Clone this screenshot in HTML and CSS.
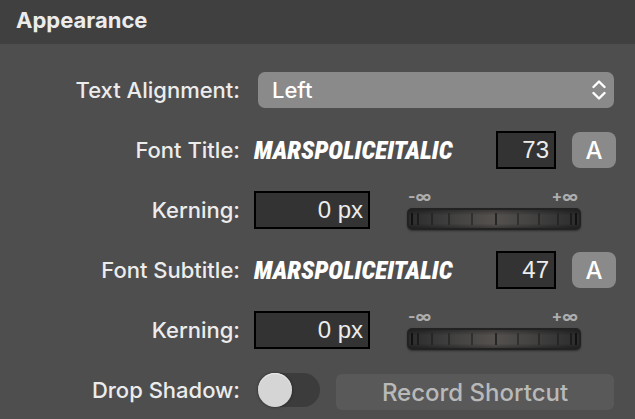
FILE: index.html
```html
<!DOCTYPE html>
<html lang="en">
<head>
    <meta charset="UTF-8">
    <meta name="viewport" content="width=device-width, initial-scale=1.0">
    <title>Appearance</title>
    <link rel="stylesheet" href="styles.css">
</head>
<body>
    <h2 class="panel-title">Appearance</h2>
    <form class="panel">
        <div class="row">
            <label class="name" for="align">Text Alignment:</label>
            <div class="controls inset">
                <div class="select-wrap">
                    <select id="align">
                        <option>Left</option>
                        <option>Center</option>
                        <option>Right</option>
                    </select>
                    <svg class="chevrons" viewBox="0 0 14 20" width="14" height="20" aria-hidden="true">
                        <path d="M1.5 7 7 1.5 12.5 7M1.5 13 7 18.5 12.5 13"/>
                    </svg>
                </div>
            </div>
        </div>
        <div class="row">
            <label class="name" for="titleSize">Font Title:</label>
            <div class="controls">
                <span class="font-name">MARSPOLICEITALIC</span>
                <input class="field size" type="text" id="titleSize" value="73">
                <button class="font-btn" type="button" aria-label="Choose title font">A</button>
            </div>
        </div>
        <div class="row">
            <label class="name" for="titleKern">Kerning:</label>
            <div class="controls">
                <input class="field kern" type="text" id="titleKern" value="0 px">
                <div class="wheel-box">
                    <div class="limits"><span>-∞</span><span>+∞</span></div>
                    <input class="wheel" type="range" aria-label="Title kerning">
                </div>
            </div>
        </div>
        <div class="row">
            <label class="name" for="subSize">Font Subtitle:</label>
            <div class="controls">
                <span class="font-name">MARSPOLICEITALIC</span>
                <input class="field size" type="text" id="subSize" value="47">
                <button class="font-btn" type="button" aria-label="Choose subtitle font">A</button>
            </div>
        </div>
        <div class="row">
            <label class="name" for="subKern">Kerning:</label>
            <div class="controls">
                <input class="field kern" type="text" id="subKern" value="0 px">
                <div class="wheel-box">
                    <div class="limits"><span>-∞</span><span>+∞</span></div>
                    <input class="wheel" type="range" aria-label="Subtitle kerning">
                </div>
            </div>
        </div>
        <div class="row">
            <label class="name" for="shadow">Drop Shadow:</label>
            <div class="controls inset">
                <input class="switch" type="checkbox" id="shadow">
                <button class="record" type="button">Record Shortcut</button>
            </div>
        </div>
    </form>
</body>
</html>
```

FILE: styles.css
```css
* {
    box-sizing: border-box;
}
body {
    margin: 0;
    background: #4e4e4e;
    color: #ececec;
    font-family: Inter, "Liberation Sans", sans-serif;
    font-size: 22px;
    font-weight: 500;
    overflow: hidden;
}
.panel-title {
    margin: 0;
    padding: 0 16px;
    height: 44px;
    line-height: 40px;
    background: #404040;
    font-size: 22px;
    font-weight: 700;
}
.panel {
    padding: 16px 19px 0 0;
}
.row {
    display: flex;
    align-items: center;
    height: 60px;
}
.name {
    flex: 0 0 240px;
    text-align: right;
    white-space: nowrap;
}
.controls {
    flex: 1;
    display: flex;
    align-items: center;
    padding-left: 14px;
}
.inset {
    padding-left: 18px;
    padding-right: 2px;
}
input, select, button {
    margin: 0;
    border: 0;
    font: inherit;
    color: inherit;
}
.select-wrap {
    position: relative;
    flex: 1;
}
select {
    appearance: none;
    display: block;
    width: 100%;
    height: 36px;
    padding: 0 14px;
    border-radius: 7px;
    background: #8a8a8a;
    color: #fff;
}
.chevrons {
    position: absolute;
    top: 8px;
    right: 8px;
    fill: none;
    stroke: #fff;
    stroke-width: 2.4;
    stroke-linecap: round;
    stroke-linejoin: round;
    pointer-events: none;
}
.font-name {
    flex: 1;
    color: #fff;
    font: italic 900 25px "Roboto Condensed", Roboto, sans-serif;
}
.field {
    height: 38px;
    padding: 0 5px;
    border: 2px solid #000;
    background: #333;
    font: 24px "Liberation Sans", Arial, sans-serif;
    text-align: right;
}
.size {
    width: 60px;
}
.kern {
    width: 116px;
}
.font-btn {
    width: 44px;
    height: 36px;
    margin-left: 16px;
    padding: 0;
    border-radius: 8px;
    background: #8a8a8a;
    color: #fff;
    font-size: 24px;
}
.wheel-box {
    flex: 1;
    margin: 0 35px 0 37px;
}
.limits {
    display: flex;
    justify-content: space-between;
    height: 18px;
    padding: 0 3px 0 1px;
    color: #adadad;
    font-size: 16px;
    font-weight: 700;
    line-height: 12px;
}
.wheel {
    appearance: none;
    display: block;
    width: 100%;
    height: 22px;
    border: 2px solid #222;
    border-radius: 5px;
    background:
        linear-gradient(#111, #111) 1% 50% / 2px 12px,
        linear-gradient(#1c1c1c, #1c1c1c) 5% 50% / 2px 12px,
        linear-gradient(#262626, #262626) 13% 50% / 2px 12px,
        linear-gradient(#2b2b2b, #2b2b2b) 23% 50% / 2px 12px,
        linear-gradient(#303030, #303030) 37% 50% / 2px 12px,
        linear-gradient(#262626, #262626) 51% 50% / 2px 12px,
        linear-gradient(#303030, #303030) 64% 50% / 2px 12px,
        linear-gradient(#2b2b2b, #2b2b2b) 77% 50% / 2px 12px,
        linear-gradient(#262626, #262626) 88% 50% / 2px 12px,
        linear-gradient(#1c1c1c, #1c1c1c) 96% 50% / 2px 12px,
        linear-gradient(#111, #111) 99% 50% / 2px 12px,
        linear-gradient(rgba(0, 0, 0, 0.3), transparent 30%, transparent 75%, rgba(0, 0, 0, 0.3)),
        linear-gradient(90deg, #2c2c2c, #454443 30%, #55514f 50%, #454443 70%, #2c2c2c);
    background-repeat: no-repeat;
    box-shadow: 0 1px 2px rgba(0, 0, 0, 0.4);
}
.wheel::-webkit-slider-thumb {
    appearance: none;
    width: 2px;
    height: 12px;
    background: transparent;
}
.switch {
    appearance: none;
    width: 62px;
    height: 34px;
    border-radius: 17px;
    background: #3c3c3c;
}
.switch::before {
    content: "";
    display: block;
    width: 34px;
    height: 34px;
    border-radius: 50%;
    background: #d5d5d5;
    box-shadow: inset 0 1px 1px #eee, 0 0 3px rgba(0, 0, 0, 0.5);
}
.switch:checked::before {
    margin-left: 28px;
}
.record {
    flex: 1;
    height: 36px;
    margin: 4px 0 0 16px;
    border-radius: 6px;
    background: #595959;
    color: #b9b9b9;
    font-size: 24px;
}
```
